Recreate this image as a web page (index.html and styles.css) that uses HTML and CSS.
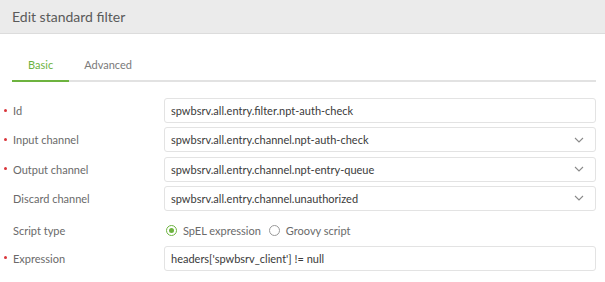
FILE: index.html
```html
<!DOCTYPE html>
<html>
<head>
<meta charset="utf-8">
<link rel="stylesheet" href="styles.css">
</head>
<body>
<div class="dialog">
  <div class="header">Edit standard filter</div>
  <div class="body">
    <div class="tabs">
      <div class="tab active">Basic</div>
      <div class="tab">Advanced</div>
    </div>
    <div class="form">
      <div class="row">
        <div class="label required">Id</div>
        <div class="field"><div class="input">spwbsrv.all.entry.filter.npt-auth-check</div></div>
      </div>
      <div class="row">
        <div class="label required">Input channel</div>
        <div class="field"><div class="input select">spwbsrv.all.entry.channel.npt-auth-check<svg class="chev" width="10" height="6" viewBox="0 0 10 6"><path d="M1 1 L5 5 L9 1" fill="none" stroke="#8a8a8a" stroke-width="1.1"/></svg></div></div>
      </div>
      <div class="row">
        <div class="label required">Output channel</div>
        <div class="field"><div class="input select">spwbsrv.all.entry.channel.npt-entry-queue<svg class="chev" width="10" height="6" viewBox="0 0 10 6"><path d="M1 1 L5 5 L9 1" fill="none" stroke="#8a8a8a" stroke-width="1.1"/></svg></div></div>
      </div>
      <div class="row">
        <div class="label">Discard channel</div>
        <div class="field"><div class="input select">spwbsrv.all.entry.channel.unauthorized<svg class="chev" width="10" height="6" viewBox="0 0 10 6"><path d="M1 1 L5 5 L9 1" fill="none" stroke="#8a8a8a" stroke-width="1.1"/></svg></div></div>
      </div>
      <div class="row radio-row">
        <div class="label">Script type</div>
        <div class="field radios">
          <span class="radio checked"></span><span class="rlabel">SpEL expression</span>
          <span class="radio"></span><span class="rlabel">Groovy script</span>
        </div>
      </div>
      <div class="row">
        <div class="label required">Expression</div>
        <div class="field"><div class="input">headers['spwbsrv_client'] != null</div></div>
      </div>
    </div>
  </div>
</div>
</body>
</html>
```
FILE: styles.css
```css
html, body {
  margin: 0;
  padding: 0;
  background: #fff;
}
body {
  font-family: "Lato", "Open Sans", sans-serif;
  width: 605px;
  height: 282px;
  overflow: hidden;
}
.header {
  height: 34px;
  box-sizing: border-box;
  background: #ebebeb;
  border-bottom: 1px solid #dcdcdc;
  padding-left: 12px;
  display: flex;
  align-items: center;
  font-size: 14px;
  color: #5a5a5a;
}
.body {
  padding: 0 9px 0 12px;
}
.tabs {
  margin-top: 22px;
  display: flex;
  border-bottom: 2px solid #e2e2e2;
  height: 24px;
}
.tab {
  font-size: 11px;
  color: #7a7a7a;
  padding: 2px 16px 0;
  margin-bottom: -2px;
  border-bottom: 2px solid transparent;
}
.tab.active {
  color: #6db33f;
  border-bottom-color: #6db33f;
}
.tab + .tab {
  padding-left: 15px;
}
.form {
  margin-top: 16px;
  margin-left: -12px;
  display: flex;
  flex-direction: column;
  gap: 4.3px;
}
.row {
  display: flex;
  align-items: center;
  height: 25px;
}
.label {
  width: 164px;
  box-sizing: border-box;
  padding-left: 13px;
  font-size: 11px;
  color: #6a6a6a;
  position: relative;
}
.label.required::before {
  content: "";
  position: absolute;
  left: 4px;
  top: 50%;
  width: 3px;
  height: 3px;
  margin-top: -2px;
  border-radius: 50%;
  background: #d9343a;
}
.field {
  flex: 1;
}
.input {
  height: 25px;
  box-sizing: border-box;
  border: 1px solid #e3e3e3;
  border-radius: 3px;
  padding: 0 6px;
  display: flex;
  align-items: center;
  font-size: 11px;
  color: #3a3a3a;
}
.select {
  justify-content: space-between;
  padding-right: 11px;
}
.radio-row {
  height: 26.5px;
  box-sizing: border-box;
  padding-top: 4px;
}
.radios {
  display: flex;
  align-items: center;
  padding-left: 2px;
}
.radio {
  width: 11px;
  height: 11px;
  box-sizing: border-box;
  border: 1px solid #999;
  border-radius: 50%;
  position: relative;
}
.radio.checked {
  border-color: #6db33f;
}
.radio.checked::after {
  content: "";
  position: absolute;
  left: 2px;
  top: 2px;
  width: 5px;
  height: 5px;
  border-radius: 50%;
  background: #6db33f;
}
.rlabel {
  font-size: 11px;
  color: #6a6a6a;
  margin-left: 6px;
  margin-right: 8px;
}
```
